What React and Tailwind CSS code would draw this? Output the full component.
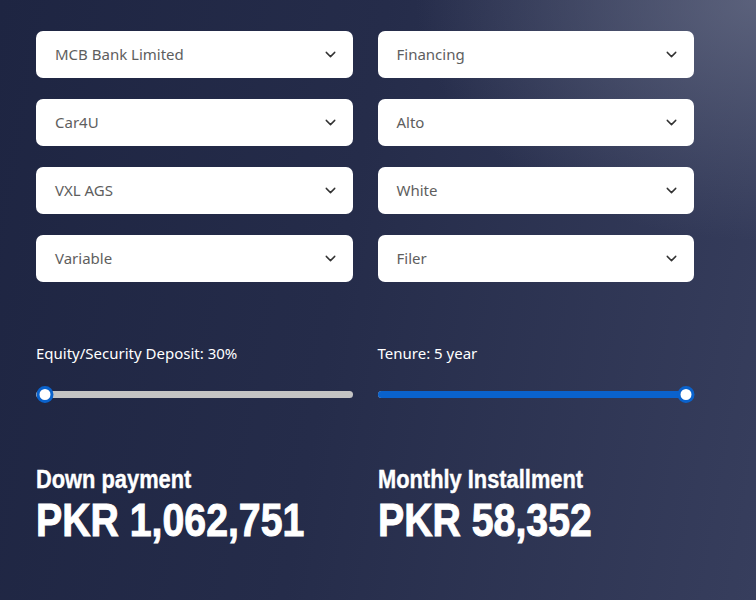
import React, { useState } from "react";
import { ChevronDown } from "lucide-react";

const fields = [
  ["MCB Bank Limited", "Financing"],
  ["Car4U", "Alto"],
  ["VXL AGS", "White"],
  ["Variable", "Filer"],
];

function Select({ value }) {
  return (
    <button
      type="button"
      className="flex h-[47px] w-full items-center justify-between rounded-[7px] bg-white pl-[19px] pr-[14px] text-left text-[15px] text-[#5e5e5e]"
    >
      <span>{value}</span>
      <ChevronDown className="h-[17px] w-[17px] text-[#333]" strokeWidth={2} />
    </button>
  );
}

function Slider({ label, value }) {
  return (
    <div>
      <div className="text-[15px] text-white">{label}</div>
      <div className="relative mt-[21px] h-[16px]">
        <div className="absolute left-0 right-0 top-[5px] h-[7px] rounded-full bg-[#c4c4c4]" />
        <div
          className="absolute left-0 top-[5px] h-[7px] rounded-full bg-[#0a62cc]"
          style={{ width: `${value}%` }}
        />
        <div
          className="absolute top-0 h-[17px] w-[17px] -translate-x-1/2 rounded-full border-[3px] border-[#0a62cc] bg-white"
          style={{ left: `calc(${value}% * (100% - 17px) / 100% + 8.5px)` }}
        />
      </div>
    </div>
  );
}

// narrow bold figures: Arial-width face squeezed horizontally
function Figure({ title, amount }) {
  return (
    <div className="whitespace-nowrap font-['Liberation_Sans',Arial,sans-serif] font-bold text-white">
      <div className="text-[26px] leading-[30px] [-webkit-text-stroke:0.4px_white]">
        <span className="inline-block origin-left scale-x-[0.84]">{title}</span>
      </div>
      <div className="mt-[1px] text-[47px] leading-[50px] [-webkit-text-stroke:1px_white]">
        <span className="inline-block origin-left scale-x-[0.835]">{amount}</span>
      </div>
    </div>
  );
}

export default function App() {
  const [deposit] = useState(0);
  const [tenure] = useState(100);

  return (
    <div className="min-h-[600px] w-full bg-[radial-gradient(ellipse_45%_40%_at_100%_0%,rgba(112,118,142,0.65),rgba(112,118,142,0)),linear-gradient(100deg,#1e2542_0%,#252c4a_45%,#373e5d_100%)] px-[36px] pt-[31px] font-['Noto_Sans','Open_Sans',sans-serif]">
      <div className="grid w-[658px] grid-cols-2 gap-x-[25px] gap-y-[21px]">
        {fields.map(([a, b]) => (
          <React.Fragment key={a}>
            <Select value={a} />
            <Select value={b} />
          </React.Fragment>
        ))}
      </div>

      <div className="mt-[60px] grid w-[658px] grid-cols-2 gap-x-[25px]">
        <Slider label="Equity/Security Deposit: 30%" value={deposit} />
        <Slider label="Tenure: 5 year" value={tenure} />
      </div>

      <div className="mt-[62px] grid w-[658px] grid-cols-2 gap-x-[25px]">
        <Figure title="Down payment" amount="PKR 1,062,751" />
        <Figure title="Monthly Installment" amount="PKR 58,352" />
      </div>
    </div>
  );
}
